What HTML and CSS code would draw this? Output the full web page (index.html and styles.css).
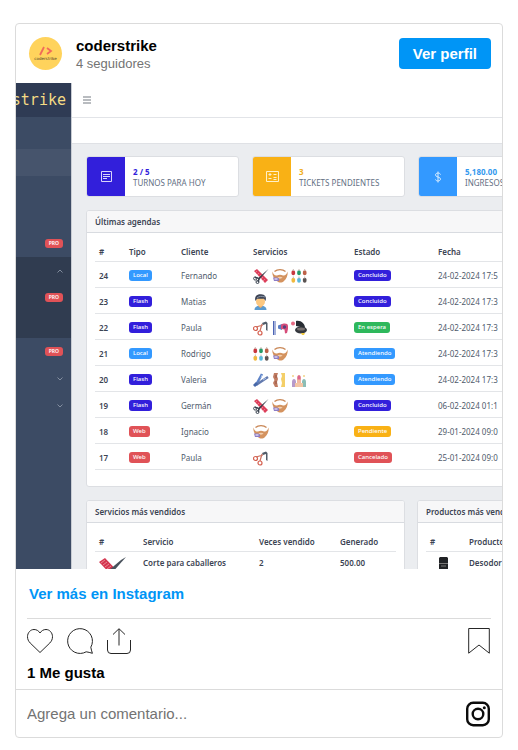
FILE: index.html
```html
<!DOCTYPE html>
<html lang="es">
<head>
<meta charset="utf-8">
<meta name="viewport" content="width=device-width, initial-scale=1">
<title>coderstrike</title>
<link rel="stylesheet" href="styles.css">
</head>
<body>
<svg class="sprite" aria-hidden="true">
  <symbol id="comb" viewBox="0 0 16 16">
    <path d="M1 3l3-2 11 11-3 3z" fill="#dc3f5b"/>
    <path d="M2 5l2-2M4 7l2-2M6 9l2-2M8 11l2-2M10 13l2-2" stroke="#f7a5b2" stroke-width=".6"/>
    <path d="M15.500 1L6 12 4.500 10.500z" fill="#39424e"/>
    <path d="M5 10L2 9.500M6 11l-1 3" stroke="#39424e" stroke-width="1.500"/>
    <circle cx="2.200" cy="10.500" r="1.600" fill="none" stroke="#39424e"/>
    <circle cx="4.500" cy="14" r="1.500" fill="none" stroke="#39424e"/>
  </symbol>
  <symbol id="beard" viewBox="0 0 16 16">
    <path d="M.3 3.500C1.500 6.500 3 8 5 7.500c2-1 4-1 6 0 2 .5 3.500-1 4.700-4 .2 4-1.200 7.500-3.700 9.500-2 2-5 2-7 0C2 11 .1 7.500.3 3.500z" fill="#d4935f"/>
    <path d="M5.500 9.500c1.500-1 3.500-1 5 0-1 1.500-4 1.500-5 0z" fill="#f3cfae"/>
    <path d="M2.500 3.500c3-2.500 8-2.500 11 0" fill="none" stroke="#c98756" stroke-width="1.400"/>
    <path d="M1 9.500h4l2 1v2.500H2z" fill="#8d7cc4"/>
    <path d="M2.500 11h3" stroke="#fff"/>
  </symbol>
  <symbol id="drops" viewBox="0 0 16 16">
    <g stroke-width="3.600" stroke-linecap="round">
      <path d="M2.300 4v1.500" stroke="#c8383f"/>
      <path d="M8 4v1.500" stroke="#259b69"/>
      <path d="M13.700 4v1.500" stroke="#bd6147"/>
      <path d="M2.300 11.500V13" stroke="#f0b93e"/>
      <path d="M8 11.500V13" stroke="#58b9de"/>
      <path d="M13.700 11.500V13" stroke="#5a5352"/>
    </g>
    <path d="M2.300 1v2M8 1v2M13.700 1v2M2.300 8.500v2M8 8.500v2M13.700 8.500v2" stroke="#c9b7b0"/>
  </symbol>
  <symbol id="man" viewBox="0 0 16 16">
    <path d="M1.500 16c0-3 2.500-4.500 6-4.500s6 1.500 6 4.500z" fill="#5b9bd0"/>
    <path d="M5.500 9h4v3.500l-2 1.500-2-1.500z" fill="#efae68"/>
    <ellipse cx="7.500" cy="7.500" rx="4.500" ry="5" fill="#fcc881"/>
    <path d="M2.500 7C1 2.500 4 0 8 .3c4 0 6 3 4.500 6.700L11 4.800H4z" fill="#3d4455"/>
    <path d="M4 4c2-2 5-2 8-1" stroke="#8995a8" fill="none"/>
  </symbol>
  <symbol id="trim" viewBox="0 0 16 16">
    <path d="M3 7l7-2M7 11l2-7" stroke="#c9705f" stroke-width="1.200"/>
    <circle cx="2.500" cy="8.500" r="2" fill="none" stroke="#d5604f" stroke-width="1.200"/>
    <circle cx="7" cy="13" r="2" fill="none" stroke="#d5604f" stroke-width="1.200"/>
    <path d="M9 3l4-1.500L14.500 3v8L13 10V4l-3 1z" fill="#515c68"/>
  </symbol>
  <symbol id="dryer" viewBox="0 0 16 16">
    <path d="M1.500 1v14M2 2h2M2 4h2M2 6h2M2 8h2M2 10h2M2 12h2M2 14h2" stroke="#4c65b5" stroke-width="1"/>
    <path d="M6 5.500l4-1.500v6L6 8.500z" fill="#5a7dc3"/>
    <path d="M9 5c2-2 7-2 7 1v3l-1 4-2 .5-.5-4L9 9z" fill="#d64c79"/>
    <circle cx="12.500" cy="7" r="1.700" fill="#59417c"/>
  </symbol>
  <symbol id="compact" viewBox="0 0 16 16">
    <path d="M5 1c5-1 9 3 9 7L5 6z" fill="#282c33"/>
    <ellipse cx="10" cy="10" rx="6" ry="3.500" fill="#34373d"/>
    <ellipse cx="10" cy="9" rx="4" ry="1.500" fill="#77706f"/>
    <circle cx="2" cy="3.500" r="2" fill="#e66b84"/>
    <path d="M10 13h4l-1 2h-2z" fill="#f1ca43"/>
  </symbol>
  <symbol id="iron" viewBox="0 0 16 16">
    <path d="M3 13L9 2" stroke="#5e83c7" stroke-width="2.500"/>
    <path d="M3 13l12-8" stroke="#637aae" stroke-width="2.500"/>
    <path d="M1 14l3-3" stroke="#4668a9" stroke-width="3"/>
    <path d="M8 6l1-3M10 8l3-2" stroke="#adc5eb"/>
  </symbol>
  <symbol id="wax" viewBox="0 0 16 16">
    <path d="M2 1h4l-1 3 1 3-1 3 1 5H3L1 11l1.500-3L1 5z" fill="#c07b61"/>
    <path d="M9 1h4v14H9l1-4-1-4 1-3z" fill="#f4cf68"/>
    <path d="M4 3v3M4 9v3" stroke="#955745"/>
  </symbol>
  <symbol id="nails" viewBox="0 0 16 16">
    <path d="M1 15v-5c0-4 4-4 4 0v5z" fill="#b79acb"/>
    <path d="M6 15V6c0-4 4-4 4 0v9z" fill="#f3b9a1"/>
    <path d="M11 15v-5c0-4 4-4 4 0v5z" fill="#8bbdb5"/>
    <path d="M6.500 5.500c0-3 3-3 3 0v2h-3z" fill="#dc668d"/>
    <path d="M2 3v2M1 4h2M13 3v2M12 4h2" stroke="#efcc72" stroke-width=".8"/>
    <path d="M4 15v-4h8v4z" fill="#f3c5a5"/>
  </symbol>
</svg>

<article class="post">
  <header class="profile">
    <a class="avatar" href="#" aria-label="coderstrike">
      <svg width="16" height="10" viewBox="0 0 16 10" fill="none" stroke="#f06a5a" stroke-width="1.800"><path d="M6 1L2 9M9 2l4 3-4 3"/></svg>
      <span class="avatar-name">coderstrike</span>
    </a>
    <div class="identity">
      <a class="name" href="#">coderstrike</a>
      <span class="followers">4 seguidores</span>
    </div>
    <a class="profile-button" href="#">Ver perfil</a>
  </header>

  <div class="media">
    <nav class="sidebar">
      <div class="brand">strike</div>
      <ul class="menu">
        <li class="active"></li>
        <li></li>
        <li></li>
        <li><span class="pro">PRO</span></li>
        <li class="sub"><svg class="chevron" viewBox="0 0 6 4"><path d="M.5 3.500L3 1l2.500 2.500"/></svg></li>
        <li class="sub"><span class="pro">PRO</span></li>
        <li class="sub"></li>
        <li><span class="pro">PRO</span></li>
        <li><svg class="chevron" viewBox="0 0 6 4"><path d="M.5.500L3 3 5.500.500"/></svg></li>
        <li><svg class="chevron" viewBox="0 0 6 4"><path d="M.5.500L3 3 5.500.500"/></svg></li>
      </ul>
    </nav>
    <div class="dashboard">
      <div class="topbar"><button class="toggle" type="button" aria-label="Menú"><svg width="8" height="8" viewBox="0 0 8 8" stroke="#a3a6ac" stroke-width="1.400"><path d="M0 1h8M0 4h8M0 7h8"/></svg></button></div>
      <div class="crumbs"></div>
      <div class="content">
        <div class="stats">
          <section class="stat">
            <div class="stat-icon indigo"><svg width="13" height="13" viewBox="0 0 13 13" fill="none" stroke="#d9d5fa"><path d="M1.500 1.500h10v10h-10zM3 4.500h7M3 6.500h7M3 8.500h4"/></svg></div>
            <div><b class="ink-indigo">2 / 5</b><p>TURNOS PARA HOY</p></div>
          </section>
          <section class="stat">
            <div class="stat-icon amber"><svg width="13" height="13" viewBox="0 0 13 13" fill="none" stroke="#fff0c9"><path d="M.5 1.500h12v10H.5zM2.500 4.500h3M4 3v3M2.500 8.500h3M7.500 4.500h3M7.500 7.500h3M7.500 9.500h3"/></svg></div>
            <div><b class="ink-amber">3</b><p>TICKETS PENDIENTES</p></div>
          </section>
          <section class="stat">
            <div class="stat-icon blue"><svg width="8" height="12" viewBox="0 0 8 12" fill="none" stroke="#d8ecff"><path d="M4 .5v11M6.500 3.500C6 1.500 1.500 1.500 1.500 4S6.500 5.500 6.500 8 2 10.500 1.500 8.500"/></svg></div>
            <div><b class="ink-blue">5,180.00</b><p>INGRESOS</p></div>
          </section>
        </div>

        <section class="panel agenda">
          <h2>Últimas agendas</h2>
          <table>
            <colgroup><col class="w30"><col class="w52"><col class="w72"><col class="w101"><col class="w84"><col></colgroup>
            <thead><tr><th>#</th><th>Tipo</th><th>Cliente</th><th>Servicios</th><th>Estado</th><th>Fecha</th></tr></thead>
            <tbody>
              <tr><th>24</th><td><span class="tag blue">Local</span></td><td>Fernando</td><td><span class="icons"><svg><use href="#comb"/></svg><svg><use href="#beard"/></svg><svg><use href="#drops"/></svg></span></td><td><span class="tag indigo">Concluido</span></td><td>24-02-2024 17:5</td></tr>
              <tr><th>23</th><td><span class="tag indigo">Flash</span></td><td>Matias</td><td><span class="icons"><svg><use href="#man"/></svg></span></td><td><span class="tag indigo">Concluido</span></td><td>24-02-2024 17:3</td></tr>
              <tr><th>22</th><td><span class="tag indigo">Flash</span></td><td>Paula</td><td><span class="icons"><svg><use href="#trim"/></svg><svg><use href="#dryer"/></svg><svg><use href="#compact"/></svg></span></td><td><span class="tag green">En espera</span></td><td>24-02-2024 17:3</td></tr>
              <tr><th>21</th><td><span class="tag blue">Local</span></td><td>Rodrigo</td><td><span class="icons"><svg><use href="#drops"/></svg><svg><use href="#beard"/></svg></span></td><td><span class="tag blue">Atendiendo</span></td><td>24-02-2024 17:3</td></tr>
              <tr><th>20</th><td><span class="tag indigo">Flash</span></td><td>Valeria</td><td><span class="icons"><svg><use href="#iron"/></svg><svg><use href="#wax"/></svg><svg><use href="#nails"/></svg></span></td><td><span class="tag blue">Atendiendo</span></td><td>24-02-2024 17:3</td></tr>
              <tr><th>19</th><td><span class="tag indigo">Flash</span></td><td>Germán</td><td><span class="icons"><svg><use href="#comb"/></svg><svg><use href="#beard"/></svg></span></td><td><span class="tag indigo">Concluido</span></td><td>06-02-2024 01:1</td></tr>
              <tr><th>18</th><td><span class="tag red">Web</span></td><td>Ignacio</td><td><span class="icons"><svg><use href="#beard"/></svg></span></td><td><span class="tag amber">Pendiente</span></td><td>29-01-2024 09:0</td></tr>
              <tr><th>17</th><td><span class="tag red">Web</span></td><td>Paula</td><td><span class="icons"><svg><use href="#trim"/></svg></span></td><td><span class="tag red">Cancelado</span></td><td>25-01-2024 09:0</td></tr>
            </tbody>
          </table>
        </section>

        <div class="rankings">
          <section class="panel">
            <h2>Servicios más vendidos</h2>
            <table class="ranking">
              <colgroup><col class="w44"><col class="w116"><col class="w81"><col></colgroup>
              <thead><tr><th>#</th><th>Servicio</th><th>Veces vendido</th><th>Generado</th></tr></thead>
              <tbody><tr><td><svg width="28" height="26" viewBox="0 0 28 26"><path d="M0 5l6-4 18 19-5 5z" fill="#d4364f"/><path d="M2 6l4-3M4 8l4-3M6 10l4-3M8 12l4-3M10 14l4-3" stroke="#f5a7b3" stroke-width=".7"/><path d="M27 0L12 17l-3-3L22 3z" fill="#49525c"/></svg></td><td>Corte para caballeros</td><td>2</td><td>500.00</td></tr></tbody>
            </table>
          </section>
          <section class="panel">
            <h2>Productos más vend</h2>
            <table class="ranking">
              <colgroup><col class="w39"><col></colgroup>
              <thead><tr><th>#</th><th>Producto</th></tr></thead>
              <tbody><tr><td><svg width="26" height="26" viewBox="0 0 26 26"><path d="M10 0h7l1 1v25H9V1z" fill="#202225"/><path d="M9 6.500h9M11 9h5" stroke="#777"/></svg></td><td>Desodor</td></tr></tbody>
            </table>
          </section>
        </div>
      </div>
    </div>
  </div>

  <div class="details">
    <a class="more" href="#">Ver más en Instagram</a>
    <div class="actions">
      <button type="button" aria-label="Me gusta"><svg width="26" height="26" viewBox="0 0 26 26"><path d="M13 24.500L3.200 15C1.500 13.200.5 11.300.5 8.700.5 4.800 3.400 1.500 7 1.500c2.500 0 4.500 1.200 6 3.500 1.500-2.300 3.500-3.500 6-3.500 3.600 0 6.500 3.300 6.500 7.200 0 2.600-1 4.500-2.700 6.300z"/></svg></button>
      <button type="button" aria-label="Comentar"><svg width="26" height="26" viewBox="0 0 26 26"><path d="M23.800 19.200A12.400 12.400 0 1 0 19.200 23.800Q22 24.200 25.400 25.300 24.300 22 23.800 19.200z"/></svg></button>
      <button type="button" aria-label="Compartir"><svg width="24" height="26" viewBox="0 0 24 26"><path d="M.5 12v10q0 3.500 3.500 3.500h16q3.500 0 3.500-3.500V12M12 17.500V1M6 6.500L12 .7l6 5.800"/></svg></button>
      <button class="save" type="button" aria-label="Guardar"><svg width="22" height="26" viewBox="0 0 22 26"><path d="M.7.500h20.600v24.700L11 17 .7 25.200z"/></svg></button>
    </div>
    <p class="likes">1 Me gusta</p>
  </div>

  <footer class="comment">
    <input type="text" aria-label="Agrega un comentario" placeholder="Agrega un comentario...">
    <a class="instagram" href="#" aria-label="Instagram"><svg width="26" height="26" viewBox="0 0 26 26" fill="none" stroke="#0c0c0c" stroke-width="2.400"><rect x="2.200" y="1.800" width="21.600" height="22.400" rx="6"/><circle cx="13" cy="13" r="5.300"/><circle cx="19.300" cy="6.800" r="1.500" fill="#0c0c0c" stroke="none"/></svg></a>
  </footer>
</article>
</body>
</html>
```
FILE: styles.css
```css
* { box-sizing: border-box; }

body {
  margin: 0;
  padding: 23px 15px 12px;
  background: #fff;
  color: #000;
  font-family: "Liberation Sans", Arial, sans-serif;
  font-size: 15px;
  line-height: 18px;
}

a { color: inherit; text-decoration: none; }
button { padding: 0; border: 0; background: none; cursor: pointer; }
svg { display: block; }
p, h2, ul { margin: 0; padding: 0; }
.sprite { display: none; }

.post {
  border: 1px solid #dbdbdb;
  border-radius: 4px;
  background: #fff;
}

/* Profile header */
.profile {
  display: flex;
  align-items: center;
  height: 59px;
  padding: 0 11px 0 13px;
}
.avatar {
  display: flex;
  flex-direction: column;
  align-items: center;
  justify-content: center;
  width: 33px;
  height: 33px;
  border-radius: 50%;
  background: #ffd35c;
}
.avatar-name {
  color: #4a3b28;
  font: 4px/6px "DejaVu Sans", sans-serif;
}
.identity {
  display: flex;
  flex: 1;
  flex-direction: column;
  padding: 2px 0 0 14px;
}
.name { font-weight: 700; }
.followers { color: #737373; font-size: 13px; }
.profile-button {
  padding: 7px 14px 6px;
  border-radius: 4px;
  background: #0095f6;
  color: #fff;
  font-weight: 700;
}

/* Published picture: the booking dashboard */
.media {
  display: flex;
  aspect-ratio: 1;
  overflow: hidden;
  background: #ebedf0;
  color: #4f5b6c;
  font-family: "Noto Sans", sans-serif;
  font-size: 8px;
  line-height: 12px;
}
.sidebar {
  flex: none;
  width: 56px;
  border-right: 1px solid #c8ccd3;
  background: #3c4b64;
}
.brand {
  display: flex;
  justify-content: flex-end;
  height: 34px;
  padding-right: 5px;
  overflow: hidden;
  background: #2f3b54;
  color: #f5dc85;
  font: 15px/34px "DejaVu Sans Mono", monospace;
}
.menu { padding-top: 32px; list-style: none; }
.menu li {
  display: flex;
  align-items: center;
  justify-content: flex-end;
  height: 27px;
  padding-right: 8px;
}
.menu .active { background: #46546c; }
.menu .sub { background: #303c50; }
.pro {
  padding: 0 4px;
  border-radius: 3px;
  background: #e05257;
  color: #fff;
  font-size: 5px;
  font-weight: 600;
  line-height: 9px;
}
.chevron {
  width: 6px;
  height: 4px;
  fill: none;
  stroke: #97a1b1;
  stroke-width: .8;
}
.dashboard { flex: 1; min-width: 0; }
.topbar {
  display: flex;
  align-items: center;
  height: 35px;
  padding-left: 11px;
  border-bottom: 1px solid #e2e4e8;
  background: #fff;
}
.crumbs {
  height: 26px;
  border-bottom: 1px solid #dfe1e5;
  background: #fff;
}
.content {
  display: flex;
  flex-direction: column;
  gap: 13px;
  padding: 12px 0 0 14px;
}
.stats {
  display: grid;
  grid-template-columns: 153px 153px 153px;
  gap: 13px;
}
.stat {
  display: flex;
  gap: 8px;
  height: 41px;
  overflow: hidden;
  border: 1px solid #dcdee2;
  border-radius: 3px;
  background: #fff;
  white-space: nowrap;
}
.stat > div:last-child { padding-top: 9px; line-height: 11px; }
.stat-icon {
  display: flex;
  align-items: center;
  justify-content: center;
  flex: none;
  width: 38px;
}
.stat p { color: #636f83; }
.indigo { background: #321fdb; }
.amber { background: #f9b115; }
.blue { background: #3399ff; }
.green { background: #2eb85c; }
.red { background: #e05257; }
.ink-indigo { color: #321fdb; }
.ink-amber { color: #f0ae22; }
.ink-blue { color: #3399ee; }

.panel {
  overflow: hidden;
  border: 1px solid #dcdee2;
  border-radius: 3px;
  background: #fff;
}
.panel h2 {
  padding: 5px 8px 4px;
  border-bottom: 1px solid #d8dbe0;
  background: #f7f7f8;
  color: #3c4453;
  font-size: 8px;
  font-weight: 600;
  line-height: 12px;
  white-space: nowrap;
}
.agenda { margin-right: -180px; }
table {
  width: calc(100% - 16px);
  margin: 7px 8px 16px;
  border-spacing: 0;
  table-layout: fixed;
}
th, td {
  height: 26px;
  padding: 2px 4px 0;
  border-bottom: 1px solid #e3e5e8;
  text-align: left;
  white-space: nowrap;
}
th { color: #3c4453; font-weight: 600; }
thead th { height: 22px; }
.w30 { width: 30px; }
.w39 { width: 39px; }
.w44 { width: 44px; }
.w52 { width: 52px; }
.w72 { width: 72px; }
.w81 { width: 81px; }
.w84 { width: 84px; }
.w101 { width: 101px; }
.w116 { width: 116px; }
.tag {
  display: block;
  width: fit-content;
  padding: 0 4px;
  border-radius: 3px;
  color: #fff;
  font-size: 6px;
  font-weight: 500;
  line-height: 11px;
}
.icons { display: flex; gap: 3px; }
.icons svg { width: 16px; height: 16px; }
.rankings {
  display: grid;
  grid-template-columns: 319px 319px;
  gap: 12px;
}
.ranking td {
  height: 36px;
  padding-top: 5px;
  color: #3c4453;
  font-weight: 600;
  vertical-align: top;
}

/* Links, actions and comment box */
.details { padding: 16px 11px 7px; }
.more {
  display: block;
  padding: 0 2px 15px;
  color: #0095f6;
  font-weight: 700;
}
.actions {
  display: flex;
  gap: 14px;
  padding: 9px 1px 10px 0;
  border-top: 1px solid #dbdbdb;
}
.actions svg {
  fill: none;
  stroke: #262626;
  stroke-linejoin: round;
}
.save { margin-left: auto; }
.likes { font-weight: 700; }
.comment {
  display: flex;
  align-items: center;
  height: 48px;
  padding: 0 11px;
  border-top: 1px solid #dbdbdb;
}
.comment input {
  flex: 1;
  min-width: 0;
  padding: 0;
  border: 0;
  outline: 0;
  background: none;
  font: inherit;
}
.comment input::placeholder { color: #737373; opacity: 1; }
```
